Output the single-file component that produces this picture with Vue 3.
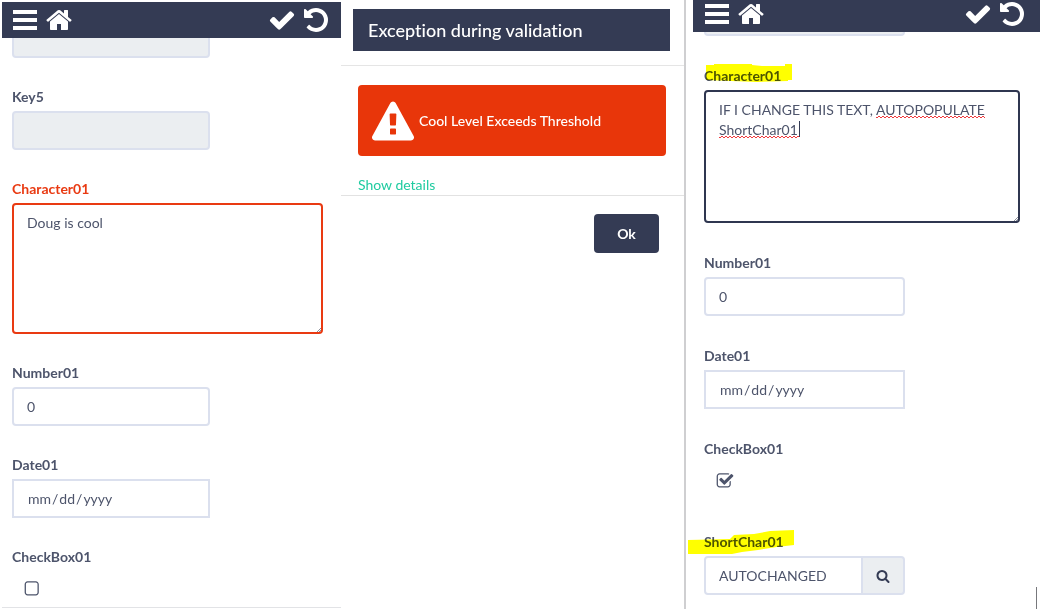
<script setup>
import { ref } from 'vue'

const paths = {
  bars: 'M128 256h1536v256H128zM128 768h1536v256H128zM128 1280h1536v256H128z',
  home: 'M1472 992v480q0 26-19 45t-45 19h-384v-384h-256v384h-384q-26 0-45-19t-19-45v-480q0-1 .5-3t.5-3l575-474 575 474q1 2 1 6zm223-69l-62 74q-8 9-21 11h-3q-13 0-21-7l-692-577-692 577q-12 8-24 7-13-2-21-11l-62-74q-8-10-7-23.5t11-21.5l719-599q32-26 76-26t76 26l244 204v-195q0-14 9-23t23-9h192q14 0 23 9t9 23v408l219 182q10 8 11 21.5t-7 23.5z',
  check: 'M1671 566q0 40-28 68l-724 724-136 136q-28 28-68 28t-68-28l-136-136-362-362q-28-28-28-68t28-68l136-136q28-28 68-28t68 28l294 295 656-657q28-28 68-28t68 28l136 136q28 28 28 68z',
  undo: 'M1664 896q0 156-61 298t-164 245-245 164-298 61q-172 0-327-72.5t-264-204.5q-7-10-6.5-22.5t8.5-20.5l137-138q10-9 25-9 16 2 23 12 73 95 179 147t225 52q104 0 198.5-40.5t163.5-109.5 109.5-163.5 40.5-198.5-40.5-198.5-109.5-163.5-163.5-109.5-198.5-40.5q-98 0-188 35.5t-160 101.5l137 138q31 30 14 69-17 40-59 40h-448q-26 0-45-19t-19-45v-448q0-42 40-59 39-17 69 14l130 129q107-101 244.5-156.5t284.5-55.5q156 0 298 61t245 164 164 245 61 298z',
  warning: 'M1024 1375v-190q0-14-9.5-23.5t-22.5-9.5h-192q-13 0-22.5 9.5t-9.5 23.5v190q0 14 9.5 23.5t22.5 9.5h192q13 0 22.5-9.5t9.5-23.5zm-2-374l18-459q0-12-10-19-13-11-24-11h-220q-11 0-24 11-10 7-10 21l17 457q0 10 10 16.5t24 6.5h185q14 0 23.5-6.5t10.5-16.5zm-14-934l768 1408q35 63-2 126-17 29-46.5 46t-63.5 17h-1536q-34 0-63.5-17t-46.5-46q-37-63-2-126l768-1408q17-31 47-49t65-18 65 18 47 49z',
  search: 'M1216 832q0-185-131.5-316.5t-316.5-131.5-316.5 131.5-131.5 316.5 131.5 316.5 316.5 131.5 316.5-131.5 131.5-316.5zm512 832q0 52-38 90t-90 38q-54 0-90-38l-343-342q-179 124-399 124-143 0-273.5-55.5t-225-150-150-225-55.5-273.5 55.5-273.5 150-225 225-150 273.5-55.5 273.5 55.5 225 150 150 225 55.5 273.5q0 220-124 399l343 343q37 37 37 90z',
  ticked: 'M1472 930v318q0 119-84.5 203.5t-203.5 84.5h-832q-119 0-203.5-84.5t-84.5-203.5v-832q0-119 84.5-203.5t203.5-84.5h832q63 0 117 25 15 7 18 23 3 17-9 29l-49 49q-10 10-23 10-3 0-9-2-23-6-45-6h-832q-66 0-113 47t-47 113v832q0 66 47 113t113 47h832q66 0 113-47t47-113v-254q0-13 9-22l64-64q10-10 23-10 6 0 12 3 20 8 20 29zm231-489l-814 814q-24 24-57 24t-57-24l-430-430q-24-24-24-57t24-57l110-110q24-24 57-24t57 24l263 263 647-647q24-24 57-24t57 24l110 110q24 24 24 57t-24 57z',
  unticked: 'M1184 256H352q-66 0-113 47t-47 113v832q0 66 47 113t113 47h832q66 0 113-47t47-113V416q0-66-47-113t-113-47zm288 160v832q0 119-84.5 203.5T1184 1536H352q-119 0-203.5-84.5T64 1248V416q0-119 84.5-203.5T352 128h832q119 0 203.5 84.5T1472 416z',
}

const leftText = ref('Doug is cool')
const leftNumber = ref('0')
const leftChecked = ref(false)
const rightText = ref('IF I CHANGE THIS TEXT, AUTOPOPULATE ShortChar01')
const rightNumber = ref('0')
const rightChecked = ref(true)
const shortChar = ref('AUTOCHANGED')
</script>

<template>
  <main class="screens">
    <section class="panel left">
      <header class="bar">
        <button type="button" aria-label="Menu"><svg viewBox="0 0 1792 1792"><path :d="paths.bars" /></svg></button>
        <button type="button" aria-label="Home"><svg viewBox="0 0 1792 1792"><path :d="paths.home" /></svg></button>
        <span class="spacer"></span>
        <button type="button" aria-label="Save"><svg viewBox="0 0 1792 1792"><path :d="paths.check" /></svg></button>
        <button type="button" aria-label="Undo"><svg viewBox="0 0 1792 1792"><path :d="paths.undo" /></svg></button>
      </header>
      <form class="body" @submit.prevent>
        <div class="field under-bar">
          <input class="control" type="text" aria-label="Key4" disabled />
        </div>
        <div class="field">
          <label for="l-key5">Key5</label>
          <input id="l-key5" class="control" type="text" disabled />
        </div>
        <div class="field invalid">
          <label for="l-char">Character01</label>
          <div class="area">
            <textarea id="l-char" v-model="leftText" class="control" spellcheck="false"></textarea>
            <svg class="grip" viewBox="0 0 4 4"><path d="M0 4L4 0M2 4L4 2" /></svg>
          </div>
        </div>
        <div class="field">
          <label for="l-num">Number01</label>
          <input id="l-num" v-model="leftNumber" class="control" type="text" inputmode="numeric" />
        </div>
        <div class="field">
          <label for="l-date">Date01</label>
          <input id="l-date" class="control" type="date" />
        </div>
        <div class="field last">
          <label for="l-check">CheckBox01</label>
          <div class="tick">
            <input id="l-check" v-model="leftChecked" type="checkbox" />
            <svg viewBox="0 0 1792 1792"><path :d="leftChecked ? paths.ticked : paths.unticked" /></svg>
          </div>
        </div>
      </form>
    </section>

    <section class="panel middle" role="dialog" aria-labelledby="dialog-title">
      <div class="dialog-head">
        <h1 id="dialog-title">Exception during validation</h1>
      </div>
      <div class="dialog-body">
        <div class="alert" role="alert">
          <svg viewBox="0 0 1792 1664"><path :d="paths.warning" /></svg>
          <span>Cool Level Exceeds Threshold</span>
        </div>
        <a href="#details">Show details</a>
      </div>
      <div class="dialog-foot">
        <button type="button" class="ok">Ok</button>
      </div>
    </section>

    <section class="panel right">
      <header class="bar">
        <button type="button" aria-label="Menu"><svg viewBox="0 0 1792 1792"><path :d="paths.bars" /></svg></button>
        <button type="button" aria-label="Home"><svg viewBox="0 0 1792 1792"><path :d="paths.home" /></svg></button>
        <span class="spacer"></span>
        <button type="button" aria-label="Save"><svg viewBox="0 0 1792 1792"><path :d="paths.check" /></svg></button>
        <button type="button" aria-label="Undo"><svg viewBox="0 0 1792 1792"><path :d="paths.undo" /></svg></button>
      </header>
      <form class="body" @submit.prevent>
        <div class="field under-bar">
          <input class="control" type="text" aria-label="Key5" disabled />
        </div>
        <div class="field focused">
          <label for="r-char">
            <svg class="marker marker-top" viewBox="0 0 86 18">
              <path d="M0 1H8V0H46V1L56 2H79V0H86V16H82V17L51 18L0 16Z" />
            </svg>Character01</label>
          <div class="area">
            <textarea id="r-char" v-model="rightText" class="control" spellcheck="false"></textarea>
            <svg class="squiggle first" aria-hidden="true"><rect width="100%" height="3" fill="url(#wave)" /></svg>
            <svg class="squiggle second" aria-hidden="true">
              <defs>
                <pattern id="wave" width="4" height="3" patternUnits="userSpaceOnUse">
                  <path d="M-1 0L1 2L3 0L5 2" />
                </pattern>
              </defs>
              <rect width="100%" height="3" fill="url(#wave)" />
            </svg>
            <span class="caret"></span>
            <svg class="grip" viewBox="0 0 4 4"><path d="M0 4L4 0M2 4L4 2" /></svg>
          </div>
        </div>
        <div class="field">
          <label for="r-num">Number01</label>
          <input id="r-num" v-model="rightNumber" class="control" type="text" inputmode="numeric" />
        </div>
        <div class="field">
          <label for="r-date">Date01</label>
          <input id="r-date" class="control" type="date" />
        </div>
        <div class="field">
          <label for="r-check">CheckBox01</label>
          <div class="tick">
            <input id="r-check" v-model="rightChecked" type="checkbox" />
            <svg viewBox="0 0 1792 1792"><path :d="rightChecked ? paths.ticked : paths.unticked" /></svg>
          </div>
        </div>
        <div class="field last">
          <label for="r-short">
            <svg class="marker marker-bottom" viewBox="0 0 106 24">
              <path d="M0 10L42 9L46 5L66 4L82 1L106 0V15L89 17L70 20L54 22L44 24H0Z" />
            </svg>ShortChar01</label>
          <div class="group">
            <input id="r-short" v-model="shortChar" class="control" type="text" />
            <button type="button" aria-label="Search"><svg viewBox="0 0 1792 1792"><path :d="paths.search" /></svg></button>
          </div>
        </div>
      </form>
      <span class="edge"></span>
    </section>
  </main>
</template>

<style>
body {
  background: #fff;
}
</style>

<style scoped>
.screens {
  --navy: #343b54;
  --line: #dbe0ee;
  --ink: #4d546b;
  --gap: 30px;
  display: grid;
  grid-template-columns: 341fr 345fr 354fr;
  font-family: Lato, "Liberation Sans", sans-serif;
  font-size: 14px;
  line-height: 20px;
  font-variant-ligatures: none;
  color: var(--ink);
}
.screens * {
  box-sizing: border-box;
}
button {
  border: 0;
  padding: 0;
  background: none;
  font: inherit;
  color: inherit;
}
svg {
  display: block;
  fill: currentColor;
}
.left {
  --gap: 29px;
  padding: 2px 0 0 2px;
}
.bar {
  position: relative;
  z-index: 1;
  display: flex;
  align-items: center;
  gap: 6px;
  height: 36px;
  padding: 0 11px 0 9px;
  background: var(--navy);
  color: #fff;
}
.bar svg {
  width: 28px;
  height: 28px;
}
.spacer {
  flex: 1;
}
.body {
  padding: 0 18px 0 10px;
}
.left .body {
  border-bottom: 1px solid #e2e3e6;
}
.field {
  margin-bottom: var(--gap);
}
.field.last {
  margin-bottom: 0;
}
.field.under-bar {
  margin-top: -19px;
}
label {
  position: relative;
  display: block;
  width: fit-content;
  margin-bottom: 4px;
  font-weight: 700;
}
.control {
  display: block;
  width: calc(100% * 7 / 11);
  height: 39px;
  margin: 0;
  padding: 0 13px;
  border: 2px solid var(--line);
  border-radius: 4px;
  outline: 0;
  background: #fff;
  font: inherit;
  color: inherit;
}
.control:disabled {
  background: #ebeef1;
}
input[type="date"] {
  border-radius: 0;
}
input[type="date"]::-webkit-calendar-picker-indicator {
  display: none;
}
.area {
  position: relative;
}
textarea.control {
  width: 100%;
  height: 131px;
  padding: 8px 13px;
  resize: none;
  overflow: hidden;
}
.invalid label {
  color: #e93a12;
}
.invalid .control {
  border-color: #e93a12;
}
.grip {
  position: absolute;
  right: 2px;
  bottom: 2px;
  width: 4px;
  height: 4px;
  fill: none;
  stroke: #8b8f9b;
}
.tick {
  position: relative;
  width: 18px;
  height: 36px;
  margin-left: 12px;
  padding: 8px 0;
}
.tick input {
  position: absolute;
  inset: 8px 0;
  width: 18px;
  height: 20px;
  margin: 0;
  opacity: 0;
}
.tick svg {
  width: 18px;
  height: 20px;
}

.middle {
  border-right: 2px solid #cfcfd1;
  padding-top: 9px;
}
.dialog-head {
  padding: 0 14px 14px 12px;
  border-bottom: 1px solid #e5e5e5;
}
h1 {
  margin: 0;
  padding: 9px 15px;
  background: var(--navy);
  color: #fff;
  font-size: 18px;
  font-weight: 500;
  line-height: 24px;
}
.dialog-body {
  padding: 19px 18px 0 17px;
  border-bottom: 1px solid #e2e2e2;
}
.alert {
  display: flex;
  align-items: center;
  gap: 5px;
  height: 71px;
  margin-bottom: 19px;
  padding: 0 14px;
  border-radius: 4px;
  background: #e8360a;
  color: #fff;
  font-weight: 500;
}
.alert svg {
  width: 42px;
  height: 40px;
}
a {
  display: block;
  width: fit-content;
  color: #1fcba0;
  text-decoration: none;
}
.dialog-foot {
  display: flex;
  justify-content: flex-end;
  padding: 18px 25px;
}
.ok {
  width: 65px;
  height: 39px;
  border-radius: 4px;
  background: var(--navy);
  color: #fff;
  font-weight: 700;
}

.right {
  position: relative;
}
.right .bar {
  height: 32px;
  margin-left: 7px;
  padding: 0 14px 4px 10px;
}
.right .body {
  padding: 0 20px 14px 18px;
}
.right .under-bar {
  margin-top: -35px;
}
.right textarea.control {
  height: 133px;
}
.right .tick {
  height: 39px;
}
.focused .control {
  border-color: #2f3650;
}
.marker {
  position: absolute;
  z-index: 1;
  fill: #ffff00;
  mix-blend-mode: multiply;
}
.marker-top {
  top: -2px;
  left: 2px;
  width: 86px;
  height: 18px;
}
.marker-bottom {
  top: -2px;
  left: -16px;
  width: 106px;
  height: 24px;
}
.squiggle {
  position: absolute;
  height: 3px;
}
.squiggle path {
  fill: none;
  stroke: #f0383c;
}
.first {
  top: 26px;
  left: 172px;
  width: 109px;
}
.second {
  top: 46px;
  left: 15px;
  width: 80px;
}
.caret {
  position: absolute;
  top: 31px;
  left: 95px;
  width: 1px;
  height: 16px;
  background: #343b54;
}
.group {
  display: flex;
  width: calc(100% * 7 / 11);
}
.group .control {
  flex: 1;
  min-width: 0;
  border-radius: 4px 0 0 4px;
}
.group button {
  display: grid;
  place-items: center;
  width: 42px;
  border: 2px solid var(--line);
  border-left: 0;
  border-radius: 0 4px 4px 0;
  background: #ebeef1;
  color: var(--navy);
}
.group svg {
  width: 14px;
  height: 14px;
}
.edge {
  position: absolute;
  right: 3px;
  bottom: 0;
  width: 1px;
  height: 22px;
  background: #77787c;
}
</style>
